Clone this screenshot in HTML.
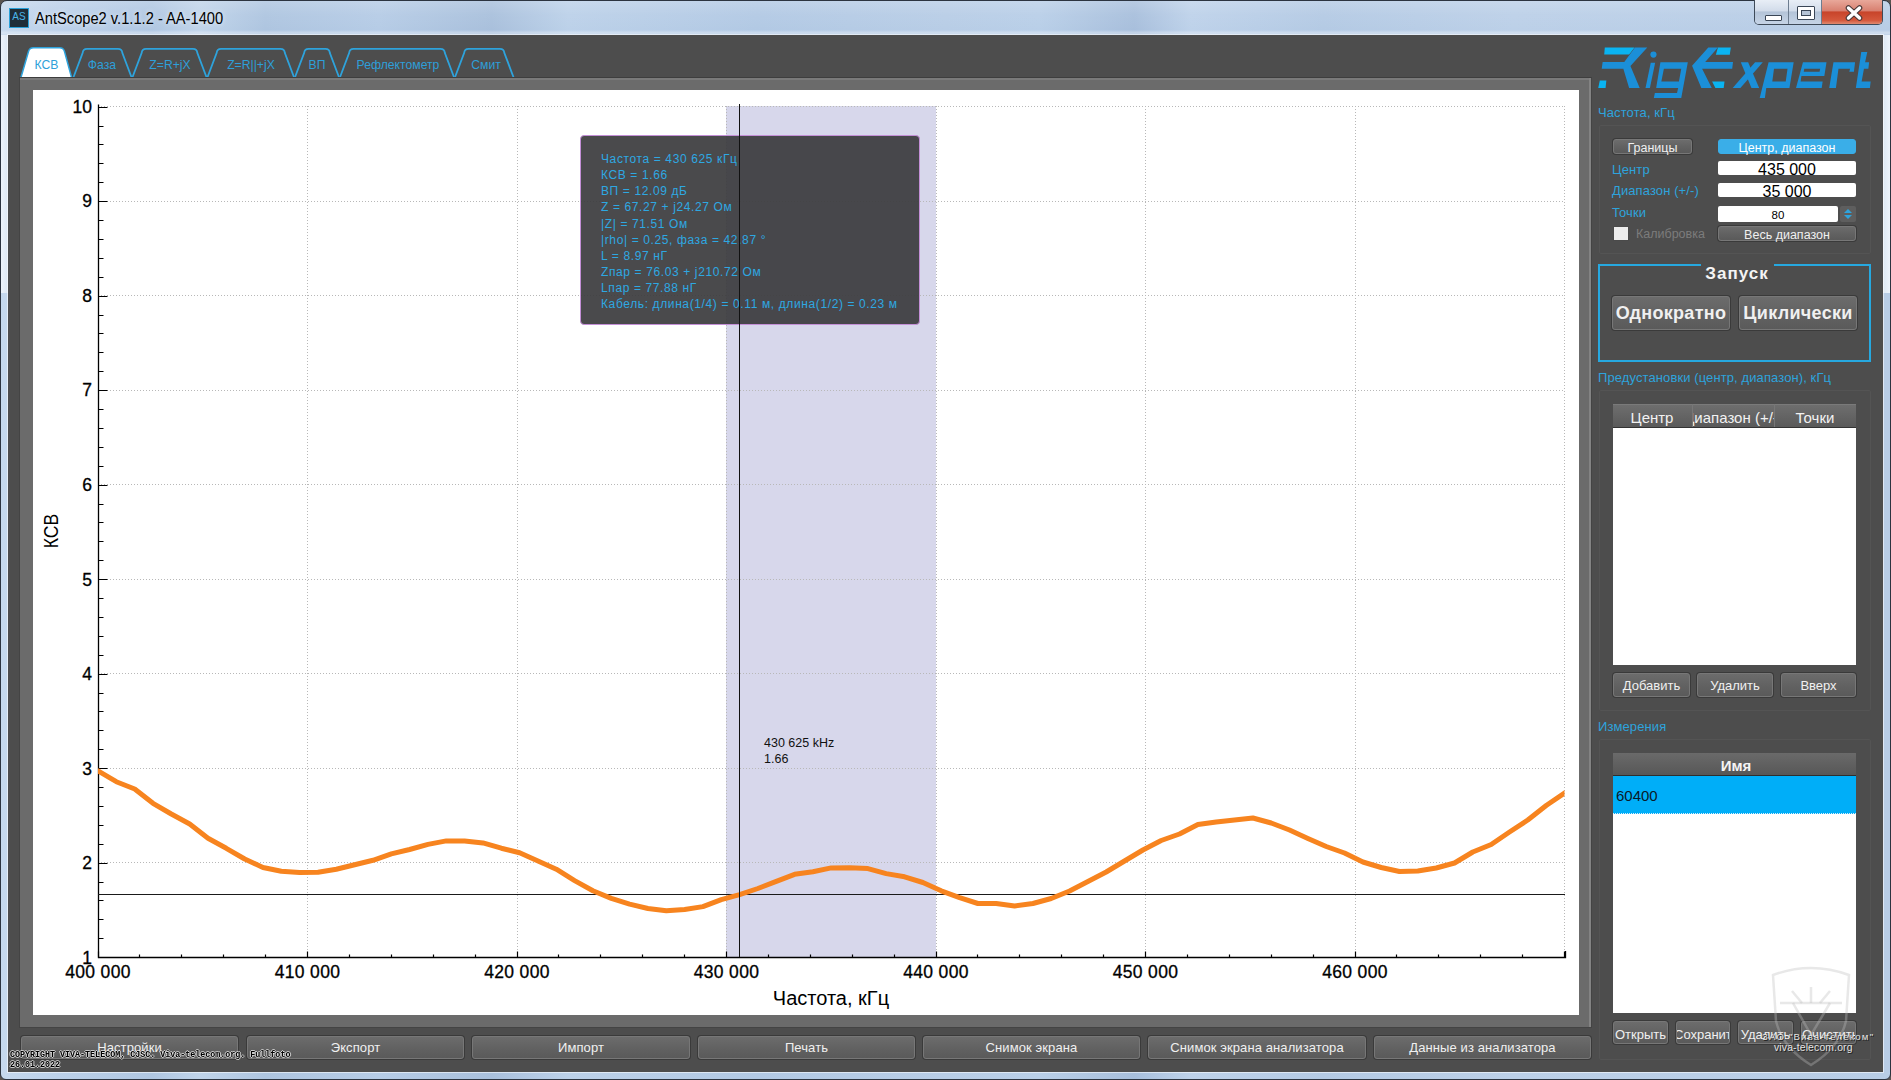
<!DOCTYPE html>
<html><head><meta charset="utf-8">
<style>
*{box-sizing:border-box;margin:0;padding:0}
html,body{width:1891px;height:1080px;overflow:hidden;background:#5a5450;font-family:"Liberation Sans",sans-serif}
.a{position:absolute}
#frame{left:0;top:0;width:1891px;height:1080px;border:1px solid #2c3440;border-radius:7px 7px 6px 6px;
 background:linear-gradient(90deg,#c6d9ee 0%,#bcd1ea 3%,#b0c7e2 8%,#c0d4ea 10.5%,#aec5e0 14%,#b6cce6 20%,#a9c0dc 26%,#bcd1e9 30%,#b2c9e4 40%,#b8cde6 50%,#b9cfe8 55%,#a8bfdc 60%,#bed2ea 63%,#b4cae4 70%,#bcd0e8 80%,#b8cde6 100%)}
#titlebg{left:1px;top:1px;width:1889px;height:34px;border-radius:6px 6px 0 0;
 background:linear-gradient(180deg,rgba(255,255,255,0.18) 0%,rgba(255,255,255,0.05) 40%,rgba(255,255,255,0) 85%,rgba(255,255,255,0.35) 94%,rgba(255,255,255,0.1) 100%)}
#client{left:8px;top:35px;width:1875px;height:1037px;background:#4d4d4d;box-shadow:0 0 0 1px rgba(255,255,255,0.55)}
.txt{white-space:nowrap}
.lbl{color:#2ea3dc;font-size:13px;letter-spacing:0.1px;white-space:nowrap}
.btn{border:1px solid #777;border-radius:3px;background:linear-gradient(180deg,#6c6c6c 0%,#626262 50%,#5a5a5a 100%);color:#f0f0f0;text-align:center;white-space:nowrap;box-shadow:0 0 0 1px #3a3a3a}
.inp{background:#fff;border-radius:2px;color:#000;text-align:center;white-space:nowrap;overflow:hidden}
.grp{border:1px solid #545454;border-radius:2px}
</style></head>
<body>
<div id="frame" class="a"></div>
<div id="titlebg" class="a"></div>
<!-- app icon -->
<div class="a" style="left:9px;top:8px;width:20px;height:20px;background:#1f2d38;border:1px solid #2aa0d8"></div>
<div class="a txt" style="left:10px;top:11px;width:18px;text-align:center;font-size:10px;color:#4ab4e8;line-height:12px">AS</div>
<div class="a txt" style="left:35px;top:9.5px;font-size:16px;color:#000;line-height:18px;transform-origin:0 0;transform:scaleX(0.917);text-shadow:0 0 6px rgba(255,255,255,0.8)">AntScope2 v.1.1.2 - AA-1400</div>
<!-- window buttons -->
<div class="a" style="left:1754px;top:0px;width:129px;height:25px;border:1px solid #3e4a58;border-top:none;border-radius:0 0 5px 5px;overflow:hidden">
  <div class="a" style="left:0;top:0;width:34px;height:24px;background:linear-gradient(180deg,#e8eef6 0%,#d2dcea 45%,#b4c4d8 50%,#c6d4e6 100%);border-right:1px solid #6d7d90"></div>
  <div class="a" style="left:34px;top:0;width:33px;height:24px;background:linear-gradient(180deg,#e8eef6 0%,#d2dcea 45%,#b4c4d8 50%,#c6d4e6 100%);border-right:1px solid #6d7d90"></div>
  <div class="a" style="left:67px;top:0;width:62px;height:24px;background:linear-gradient(180deg,#e8a89a 0%,#d88070 45%,#c8442a 50%,#d4583c 85%,#e08a70 100%)"></div>
  <div class="a" style="left:10px;top:15px;width:17px;height:6px;background:#fff;border:1px solid #3a4656;border-radius:1px"></div>
  <div class="a" style="left:42px;top:6px;width:18px;height:14px;background:#fff;border:1px solid #3a4656;border-radius:1px"><div class="a" style="left:3px;top:3px;width:10px;height:6px;background:#b6c4d6;border:1px solid #3a4656"></div></div>
  <svg class="a" style="left:90px;top:5px" width="18" height="16" viewBox="0 0 18 16"><path d="M3.5 3 L14.5 13 M14.5 3 L3.5 13" stroke="#4a3838" stroke-width="5.6" stroke-linecap="round"/><path d="M3.5 3 L14.5 13 M14.5 3 L3.5 13" stroke="#fff" stroke-width="3.4" stroke-linecap="round"/></svg>
</div>

<div class="a" style="left:1px;top:35px;width:7px;height:258px;background:linear-gradient(90deg,#eef4fb,#dde8f4)"></div><div class="a" style="left:1883px;top:35px;width:7px;height:258px;background:linear-gradient(90deg,#dde8f4,#eef4fb)"></div>
<div id="client" class="a"></div>

<!-- tabs -->
<svg class="a" style="left:0;top:0" width="600" height="100" viewBox="0 0 600 100">
  <g fill="#4d4d4d" stroke="#2ea3dc" stroke-width="1.8">
    <path d="M73.0 78.5 L82.7 52.8 Q83.0 48.8 87.0 48.8 L118.0 48.8 Q122.0 48.8 122.3 52.8 L132.0 78.5"/>
    <path d="M132.0 78.5 L141.7 52.8 Q142.0 48.8 146.0 48.8 L193.0 48.8 Q197.0 48.8 197.3 52.8 L207.0 78.5"/>
    <path d="M207.0 78.5 L216.7 52.8 Q217.0 48.8 221.0 48.8 L280.5 48.8 Q284.5 48.8 284.8 52.8 L294.5 78.5"/>
    <path d="M294.5 78.5 L304.2 52.8 Q304.5 48.8 308.5 48.8 L325.5 48.8 Q329.5 48.8 329.8 52.8 L339.5 78.5"/>
    <path d="M339.5 78.5 L349.2 52.8 Q349.5 48.8 353.5 48.8 L440.5 48.8 Q444.5 48.8 444.8 52.8 L454.5 78.5"/>
    <path d="M454.5 78.5 L464.2 52.8 Q464.5 48.8 468.5 48.8 L500.0 48.8 Q504.0 48.8 504.3 52.8 L514.0 78.5"/>
  </g>
  <path d="M20.5 79 L28.5 51.5 Q29.5 47.8 33.5 47.8 L59.5 47.8 Q63.5 47.8 64.5 51.5 L72 79 Z" fill="#fff" stroke="#2ea3dc" stroke-width="1.5"/>
  <g font-family="Liberation Sans" font-size="12.2px" fill="#2e9fd9" text-anchor="middle">
    <text x="46.5" y="68.8">КСВ</text>
    <text x="102" y="68.8">Фаза</text>
    <text x="170" y="68.8">Z=R+jX</text>
    <text x="251" y="68.8">Z=R||+jX</text>
    <text x="317" y="68.8">ВП</text>
    <text x="398" y="68.8">Рефлектометр</text>
    <text x="486" y="68.8">Смит</text>
  </g>
</svg>

<!-- chart panel -->
<div class="a" style="left:19px;top:77px;width:1573px;height:951px;background:#6b6b6b;border:1px solid #444;border-top-color:#3e3e3e"></div><div class="a" style="left:20px;top:78px;width:1571px;height:2px;background:#7a7a7a"></div><div class="a" style="left:1589px;top:78px;width:2px;height:949px;background:#838383"></div>
<div class="a" style="left:33px;top:90px;width:1546px;height:925px;background:#fff"></div>
<svg class="a" style="left:0;top:0" width="1600" height="1030" viewBox="0 0 1600 1030">
<rect x="726" y="106" width="210" height="851" fill="#d7d7eb"/>
<line x1="307.5" y1="106" x2="307.5" y2="955" stroke="#b8b8b8" stroke-width="1" stroke-dasharray="1 2"/>
<line x1="517.5" y1="106" x2="517.5" y2="955" stroke="#b8b8b8" stroke-width="1" stroke-dasharray="1 2"/>
<line x1="726.5" y1="106" x2="726.5" y2="955" stroke="#b8b8b8" stroke-width="1" stroke-dasharray="1 2"/>
<line x1="936.5" y1="106" x2="936.5" y2="955" stroke="#b8b8b8" stroke-width="1" stroke-dasharray="1 2"/>
<line x1="1145.5" y1="106" x2="1145.5" y2="955" stroke="#b8b8b8" stroke-width="1" stroke-dasharray="1 2"/>
<line x1="1355.5" y1="106" x2="1355.5" y2="955" stroke="#b8b8b8" stroke-width="1" stroke-dasharray="1 2"/>
<line x1="1564.5" y1="106" x2="1564.5" y2="955" stroke="#b8b8b8" stroke-width="1" stroke-dasharray="1 2"/>
<line x1="101" y1="862.5" x2="1565" y2="862.5" stroke="#b8b8b8" stroke-width="1" stroke-dasharray="1 2"/>
<line x1="101" y1="768.5" x2="1565" y2="768.5" stroke="#b8b8b8" stroke-width="1" stroke-dasharray="1 2"/>
<line x1="101" y1="673.5" x2="1565" y2="673.5" stroke="#b8b8b8" stroke-width="1" stroke-dasharray="1 2"/>
<line x1="101" y1="579.5" x2="1565" y2="579.5" stroke="#b8b8b8" stroke-width="1" stroke-dasharray="1 2"/>
<line x1="101" y1="484.5" x2="1565" y2="484.5" stroke="#b8b8b8" stroke-width="1" stroke-dasharray="1 2"/>
<line x1="101" y1="390.5" x2="1565" y2="390.5" stroke="#b8b8b8" stroke-width="1" stroke-dasharray="1 2"/>
<line x1="101" y1="295.5" x2="1565" y2="295.5" stroke="#b8b8b8" stroke-width="1" stroke-dasharray="1 2"/>
<line x1="101" y1="201.5" x2="1565" y2="201.5" stroke="#b8b8b8" stroke-width="1" stroke-dasharray="1 2"/>
<line x1="101" y1="106.5" x2="1565" y2="106.5" stroke="#b8b8b8" stroke-width="1" stroke-dasharray="1 2"/>
<path d="M98.5 104.5 V957.5 H1565.5 V951" fill="none" stroke="#000" stroke-width="1.3"/>
<path d="M98.5 957.5H107.5 M98.5 938.5H103.5 M98.5 919.5H103.5 M98.5 900.5H103.5 M98.5 882.5H103.5 M98.5 863.5H107.5 M98.5 844.5H103.5 M98.5 825.5H103.5 M98.5 806.5H103.5 M98.5 787.5H103.5 M98.5 768.5H107.5 M98.5 749.5H103.5 M98.5 730.5H103.5 M98.5 711.5H103.5 M98.5 693.5H103.5 M98.5 674.5H107.5 M98.5 655.5H103.5 M98.5 636.5H103.5 M98.5 617.5H103.5 M98.5 598.5H103.5 M98.5 579.5H107.5 M98.5 560.5H103.5 M98.5 541.5H103.5 M98.5 522.5H103.5 M98.5 504.5H103.5 M98.5 485.5H107.5 M98.5 466.5H103.5 M98.5 447.5H103.5 M98.5 428.5H103.5 M98.5 409.5H103.5 M98.5 390.5H107.5 M98.5 371.5H103.5 M98.5 352.5H103.5 M98.5 333.5H103.5 M98.5 315.5H103.5 M98.5 296.5H107.5 M98.5 277.5H103.5 M98.5 258.5H103.5 M98.5 239.5H103.5 M98.5 220.5H103.5 M98.5 201.5H107.5 M98.5 182.5H103.5 M98.5 163.5H103.5 M98.5 144.5H103.5 M98.5 126.5H103.5 M98.5 107.5H107.5 M98.5 957.5V951.5 M139.5 957.5V954.5 M181.5 957.5V954.5 M223.5 957.5V954.5 M265.5 957.5V954.5 M307.5 957.5V951.5 M349.5 957.5V954.5 M391.5 957.5V954.5 M433.5 957.5V954.5 M475.5 957.5V954.5 M517.5 957.5V951.5 M558.5 957.5V954.5 M600.5 957.5V954.5 M642.5 957.5V954.5 M684.5 957.5V954.5 M726.5 957.5V951.5 M768.5 957.5V954.5 M810.5 957.5V954.5 M852.5 957.5V954.5 M894.5 957.5V954.5 M936.5 957.5V951.5 M977.5 957.5V954.5 M1019.5 957.5V954.5 M1061.5 957.5V954.5 M1103.5 957.5V954.5 M1145.5 957.5V951.5 M1187.5 957.5V954.5 M1229.5 957.5V954.5 M1271.5 957.5V954.5 M1313.5 957.5V954.5 M1355.5 957.5V951.5 M1396.5 957.5V954.5 M1438.5 957.5V954.5 M1480.5 957.5V954.5 M1522.5 957.5V954.5 M1564.5 957.5V951.5" stroke="#000" stroke-width="1.2"/>
<line x1="98" y1="894.5" x2="1565" y2="894.5" stroke="#1a1a1a" stroke-width="1.2"/>
<clipPath id="pc"><rect x="98" y="100" width="1466.5" height="860"/></clipPath><polyline clip-path="url(#pc)" points="98.0,770.8 116.3,781.7 134.7,789 153.0,803.3 171.3,814 189.7,824 208.0,838.3 226.3,848.3 244.7,859 263.0,867.5 281.3,871.3 299.6,872.5 318.0,872.2 336.3,869.2 354.6,864.7 373.0,860.3 391.3,853.9 409.6,849.5 428.0,844.4 446.3,840.9 464.6,840.9 483.0,842.9 501.3,848.2 519.6,852.7 538.0,861 556.3,869.2 574.6,880.6 592.9,890.8 611.3,898.4 629.6,904.1 647.9,908.5 666.3,910.8 684.6,909.5 702.9,906.6 721.3,899.6 739.6,894.6 757.9,888.5 776.3,881.3 794.6,874.3 812.9,871.7 831.2,867.9 849.6,867.7 867.9,868.6 886.2,873.6 904.6,876.8 922.9,882.5 941.2,890.8 959.6,897.7 977.9,903.5 996.2,903.4 1014.6,906 1032.9,903.5 1051.2,898.5 1069.6,891 1087.9,881.5 1106.2,872 1124.5,861 1142.9,850 1161.2,840.5 1179.5,834 1197.9,824.5 1216.2,822 1234.5,820 1252.9,818 1271.2,823 1289.5,830 1307.9,838.5 1326.2,846.5 1344.5,853 1362.9,862 1381.2,867.5 1399.5,871.5 1417.8,871 1436.2,868 1454.5,863 1472.8,852 1491.2,844.5 1509.5,832 1527.8,820 1546.2,805.5 1564.5,793" fill="none" stroke="#f7841f" stroke-width="5" stroke-linejoin="round" stroke-linecap="round"/>
<g font-family="Liberation Sans" font-size="17.5px" fill="#000" stroke="#000" stroke-width="0.3"><text x="92" y="963.5" text-anchor="end">1</text><text x="92" y="869.0" text-anchor="end">2</text><text x="92" y="774.5" text-anchor="end">3</text><text x="92" y="680.0" text-anchor="end">4</text><text x="92" y="585.5" text-anchor="end">5</text><text x="92" y="490.9" text-anchor="end">6</text><text x="92" y="396.4" text-anchor="end">7</text><text x="92" y="301.9" text-anchor="end">8</text><text x="92" y="207.4" text-anchor="end">9</text><text x="92" y="112.9" text-anchor="end">10</text><text x="98.0" y="978" text-anchor="middle" letter-spacing="0.35">400 000</text><text x="307.5" y="978" text-anchor="middle" letter-spacing="0.35">410 000</text><text x="517.0" y="978" text-anchor="middle" letter-spacing="0.35">420 000</text><text x="726.5" y="978" text-anchor="middle" letter-spacing="0.35">430 000</text><text x="936.0" y="978" text-anchor="middle" letter-spacing="0.35">440 000</text><text x="1145.5" y="978" text-anchor="middle" letter-spacing="0.35">450 000</text><text x="1355.0" y="978" text-anchor="middle" letter-spacing="0.35">460 000</text></g>
</svg>
<!-- y axis label -->
<div class="a txt" style="left:51px;top:531px;transform:translate(-50%,-50%) rotate(-90deg) scaleX(0.88);font-size:20px;color:#000;line-height:20px">КСВ</div>
<!-- x axis label -->
<div class="a txt" style="left:831px;top:998px;transform:translate(-50%,-50%);font-size:20px;color:#000;line-height:20px">Частота, кГц</div>
<!-- marker label -->
<div class="a txt" style="left:764px;top:735px;font-size:12.5px;line-height:16px;color:#111">430 625 kHz<br>1.66</div>

<!-- tooltip -->
<div class="a" style="left:580px;top:135px;width:340px;height:190px;background:rgba(60,60,62,0.93);border:1px solid #c38fd6;border-radius:4px"></div>
<div class="a txt" style="left:601px;top:151px;font-size:12px;letter-spacing:0.62px;line-height:16.15px;color:#2ea8e2">Частота = 430 625 кГц<br>КСВ = 1.66<br>ВП = 12.09 дБ<br>Z = 67.27 + j24.27 Ом<br>|Z| = 71.51 Ом<br>|rho| = 0.25, фаза = 42.87 °<br>L = 8.97 нГ<br>Zпар = 76.03 + j210.72 Ом<br>Lпар = 77.88 нГ<br>Кабель: длина(1/4) = 0.11 м, длина(1/2) = 0.23 м</div>
<!-- marker v line over tooltip -->
<div class="a" style="left:739px;top:104px;width:1px;height:853px;background:#111"></div>


<!-- RigExpert logo -->
<svg class="a" style="left:1594px;top:42px" width="282" height="60" viewBox="0 0 3652 777">
 <g transform="scale(1)">
  <!-- R -->
  <path fill="#0ab4f2" d="M140 72 L525 72 L455 162 L132 162 Z"/>
  <path fill="#1b8fd8" d="M530 72 L690 72 L472 310 L592 597 L455 597 L380 345 L100 345 L112 258 L392 258 Z"/>
  <path fill="#0ab4f2" d="M75 500 L160 500 L150 597 L55 597 Z"/>
  <!-- i -->
  <circle fill="#1b8fd8" cx="770" cy="163" r="40"/>
  <path fill="#1b8fd8" d="M735 268 L792 268 L724 597 L667 597 Z"/>
  <!-- g -->
  <path fill="#1b8fd8" fill-rule="evenodd" d="M860 262 L1215 262 L1130 725 L775 725 L788 660 L1075 660 L1090 597 L805 597 Z M905 345 L1130 345 L1100 510 L872 510 Z"/>
  <!-- E -->
  <path fill="#0ab4f2" d="M1605 72 L1772 72 L1758 165 L1578 165 Z"/>
  <path fill="#1b8fd8" d="M1480 72 L1605 72 L1440 258 L1800 258 L1790 345 L1400 345 L1525 597 L1390 597 L1270 308 Z"/>
  <path fill="#0ab4f2" d="M1530 510 L1690 510 L1680 597 L1572 597 Z"/>
 </g>
 <g transform="translate(1730,0) scale(1)">
  <!-- x (right half coords offset: 1730 src px -> (1730-1594)*12.95 = 1761) -->
 </g>
 <g transform="translate(1761,0)">
  <path fill="#1b8fd8" d="M140 262 L235 262 L378 597 L278 597 Z"/>
  <path fill="#1b8fd8" d="M325 262 L425 262 L135 597 L35 597 Z"/>
  <path fill="#1b8fd8" fill-rule="evenodd" d="M500 262 L825 262 L770 597 L470 597 L452 725 L385 725 Z M570 345 L745 345 L722 510 L548 510 Z"/>
  <path fill="#1b8fd8" fill-rule="evenodd" d="M945 262 L1250 262 L1222 440 L925 440 L915 510 L1200 510 L1188 597 L855 597 Z M962 345 L1168 345 L1160 385 L955 385 Z"/>
  <path fill="#1b8fd8" d="M1340 262 L1620 262 L1605 385 L1545 385 L1555 345 L1405 345 L1372 597 L1285 597 Z"/>
  <path fill="#1b8fd8" d="M1700 130 L1778 130 L1750 262 L1802 262 L1792 345 L1735 345 L1705 510 L1822 510 L1812 597 L1630 597 Z"/>
 </g>
</svg>

<div class="a lbl" style="left:1598px;top:105px;line-height:16px">Частота, кГц</div>
<div class="a grp" style="left:1599px;top:125px;width:272px;height:129px"></div>
<div class="a btn" style="left:1613px;top:139px;width:79px;height:15px;font-size:12.5px;line-height:16px">Границы</div>
<div class="a btn" style="left:1718px;top:139px;width:138px;height:15px;font-size:12.5px;line-height:16px;background:#3aaee8;border-color:#3aaee8;box-shadow:none;color:#fff">Центр, диапазон</div>
<div class="a lbl" style="left:1612px;top:162px;line-height:16px">Центр</div>
<div class="a lbl" style="left:1612px;top:183px;line-height:16px">Диапазон (+/-)</div>
<div class="a lbl" style="left:1612px;top:205px;line-height:16px">Точки</div>
<div class="a inp" style="left:1718px;top:161px;width:138px;height:14px;font-size:16px;line-height:18px">435 000</div>
<div class="a inp" style="left:1718px;top:183px;width:138px;height:14px;font-size:16px;line-height:18px">35 000</div>
<div class="a inp" style="left:1718px;top:206px;width:120px;height:16px;font-size:11.5px;line-height:18px">80</div>
<div class="a" style="left:1840px;top:206px;width:16px;height:16px;background:#5e5e5e;border-radius:2px"></div>
<svg class="a" style="left:1840px;top:206px" width="16" height="16"><path d="M4 7 L8 3 L12 7 Z M4 9 L12 9 L8 13 Z" fill="#2ea3dc"/></svg>
<div class="a" style="left:1613px;top:226px;width:16px;height:15px;background:#ececec;border:1px solid #4a4a4a"></div>
<div class="a txt" style="left:1636px;top:226px;font-size:12.5px;line-height:16px;color:#7c7c7c">Калибровка</div>
<div class="a btn" style="left:1718px;top:226px;width:138px;height:15px;font-size:12.5px;line-height:16px">Весь диапазон</div>

<!-- Zapusk group -->
<div class="a" style="left:1598px;top:264px;width:273px;height:98px;border:2px solid #26a8e0"></div>
<div class="a" style="left:1701px;top:262px;width:73px;height:6px;background:#4d4d4d"></div>
<div class="a txt" style="left:1737px;top:264.5px;transform:translateX(-50%);font-size:17px;font-weight:bold;line-height:18px;letter-spacing:1px;color:#f4f4f4">Запуск</div>
<div class="a btn" style="left:1612px;top:296px;width:118px;height:34px;font-size:18px;font-weight:bold;line-height:33px;letter-spacing:0.3px">Однократно</div>
<div class="a btn" style="left:1739px;top:296px;width:118px;height:34px;font-size:18px;font-weight:bold;line-height:33px;letter-spacing:0.3px">Циклически</div>

<div class="a lbl" style="left:1598px;top:370px;line-height:16px">Предустановки (центр, диапазон), кГц</div>
<div class="a grp" style="left:1599px;top:390px;width:272px;height:321px"></div>
<div class="a" style="left:1613px;top:404px;width:243px;height:261px;background:#fff"></div>
<div class="a" style="left:1613px;top:404px;width:243px;height:24px;background:linear-gradient(180deg,#6e6e6e,#5a5a5a);border-top:1px solid #7a7a7a;border-bottom:1px solid #333"></div>
<div class="a" style="left:1692px;top:404px;width:1px;height:23px;background:#777"></div>
<div class="a" style="left:1774px;top:404px;width:1px;height:23px;background:#777"></div>
<div class="a txt" style="left:1652px;top:409px;transform:translateX(-50%);font-size:15px;line-height:18px;color:#f2f2f2">Центр</div>
<div class="a" style="left:1693px;top:404px;width:81px;height:23px;overflow:hidden"><div class="a txt" style="left:40.5px;top:5px;transform:translateX(-50%);font-size:15px;line-height:18px;color:#f2f2f2">Диапазон (+/-)</div></div>
<div class="a txt" style="left:1815px;top:409px;transform:translateX(-50%);font-size:15px;line-height:18px;color:#f2f2f2">Точки</div>
<div class="a btn" style="left:1613px;top:673px;width:77px;height:24px;font-size:13px;line-height:24px">Добавить</div>
<div class="a btn" style="left:1697px;top:673px;width:76px;height:24px;font-size:13px;line-height:24px">Удалить</div>
<div class="a btn" style="left:1781px;top:673px;width:75px;height:24px;font-size:13px;line-height:24px">Вверх</div>

<div class="a lbl" style="left:1598px;top:719px;line-height:16px">Измерения</div>
<div class="a grp" style="left:1599px;top:739px;width:272px;height:321px"></div>
<div class="a" style="left:1613px;top:753px;width:243px;height:260px;background:#fff"></div>
<div class="a" style="left:1613px;top:753px;width:243px;height:23px;background:linear-gradient(180deg,#6a6a6a,#575757);border-bottom:1px solid #2e2e2e"></div>
<div class="a txt" style="left:1736px;top:757px;transform:translateX(-50%);font-size:15px;font-weight:bold;line-height:18px;color:#f4f4f4">Имя</div>
<div class="a" style="left:1613px;top:776px;width:243px;height:38px;background:#00aef8;border-bottom:1px dotted #d8f0ff"></div>
<div class="a txt" style="left:1616px;top:787px;font-size:15px;line-height:18px;color:#0a1a28">60400</div>
<div class="a btn" style="left:1613px;top:1021px;width:55px;height:23px;font-size:13px;line-height:25px">Открыть</div>
<div class="a btn" style="left:1676px;top:1021px;width:54px;height:23px;font-size:13px;line-height:25px;overflow:hidden"><span style="position:relative;left:-3px">Сохранить</span></div>
<div class="a btn" style="left:1738px;top:1021px;width:55px;height:23px;font-size:13px;line-height:25px;overflow:hidden">Удалить</div>
<div class="a btn" style="left:1801px;top:1021px;width:55px;height:23px;font-size:13px;line-height:25px;overflow:hidden">Очистить</div>



<div class="a btn" style="left:21px;top:1036px;width:217px;height:23px;font-size:13px;letter-spacing:0.1px;line-height:22px">Настройки</div>
<div class="a btn" style="left:247px;top:1036px;width:217px;height:23px;font-size:13px;letter-spacing:0.1px;line-height:22px">Экспорт</div>
<div class="a btn" style="left:472px;top:1036px;width:218px;height:23px;font-size:13px;letter-spacing:0.1px;line-height:22px">Импорт</div>
<div class="a btn" style="left:698px;top:1036px;width:217px;height:23px;font-size:13px;letter-spacing:0.1px;line-height:22px">Печать</div>
<div class="a btn" style="left:923px;top:1036px;width:217px;height:23px;font-size:13px;letter-spacing:0.1px;line-height:22px">Снимок экрана</div>
<div class="a btn" style="left:1148px;top:1036px;width:218px;height:23px;font-size:13px;letter-spacing:0.1px;line-height:22px">Снимок экрана анализатора</div>
<div class="a btn" style="left:1374px;top:1036px;width:217px;height:23px;font-size:13px;letter-spacing:0.1px;line-height:22px">Данные из анализатора</div>
<div class="a txt" style="will-change:transform;left:10px;top:1050px;font-family:'Liberation Mono',monospace;font-size:8.35px;font-weight:bold;line-height:10px;color:#000;text-shadow:1px 0 0 rgba(235,235,235,0.75),-1px 0 0 rgba(235,235,235,0.75),0 1px 0 rgba(235,235,235,0.75),0 -1px 0 rgba(235,235,235,0.75)">COPYRIGHT VIVA-TELECOM, CJSC. Viva-telecom.org. Fullfoto<br>26.01.2022</div>
<!-- watermark -->
<svg class="a" style="left:1768px;top:963px" width="86" height="106" viewBox="0 0 86 106"><g fill="none" stroke="rgba(190,190,190,0.35)" stroke-width="2.5"><path d="M5 12 Q43 -2 81 12 L78 58 Q72 84 43 102 Q14 84 8 58 Z"/><path d="M12 40 L74 40"/><path d="M25 40 L43 72 L62 40"/><path d="M43 24 L43 40 M24 28 L34 40 M62 28 L52 40"/></g></svg>
<div class="a txt" style="left:1774px;top:1042px;font-size:10.4px;letter-spacing:0.15px;line-height:12px;color:#e4e4e4;text-shadow:1px 1px 0 #222">viva-telecom.org</div><div class="a txt" style="left:1762px;top:1031px;font-size:9.6px;letter-spacing:1.2px;line-height:12px;color:#e4e4e4;text-shadow:1px 1px 0 #222">ЗАО "Вива-телеком"</div>

</body></html>
